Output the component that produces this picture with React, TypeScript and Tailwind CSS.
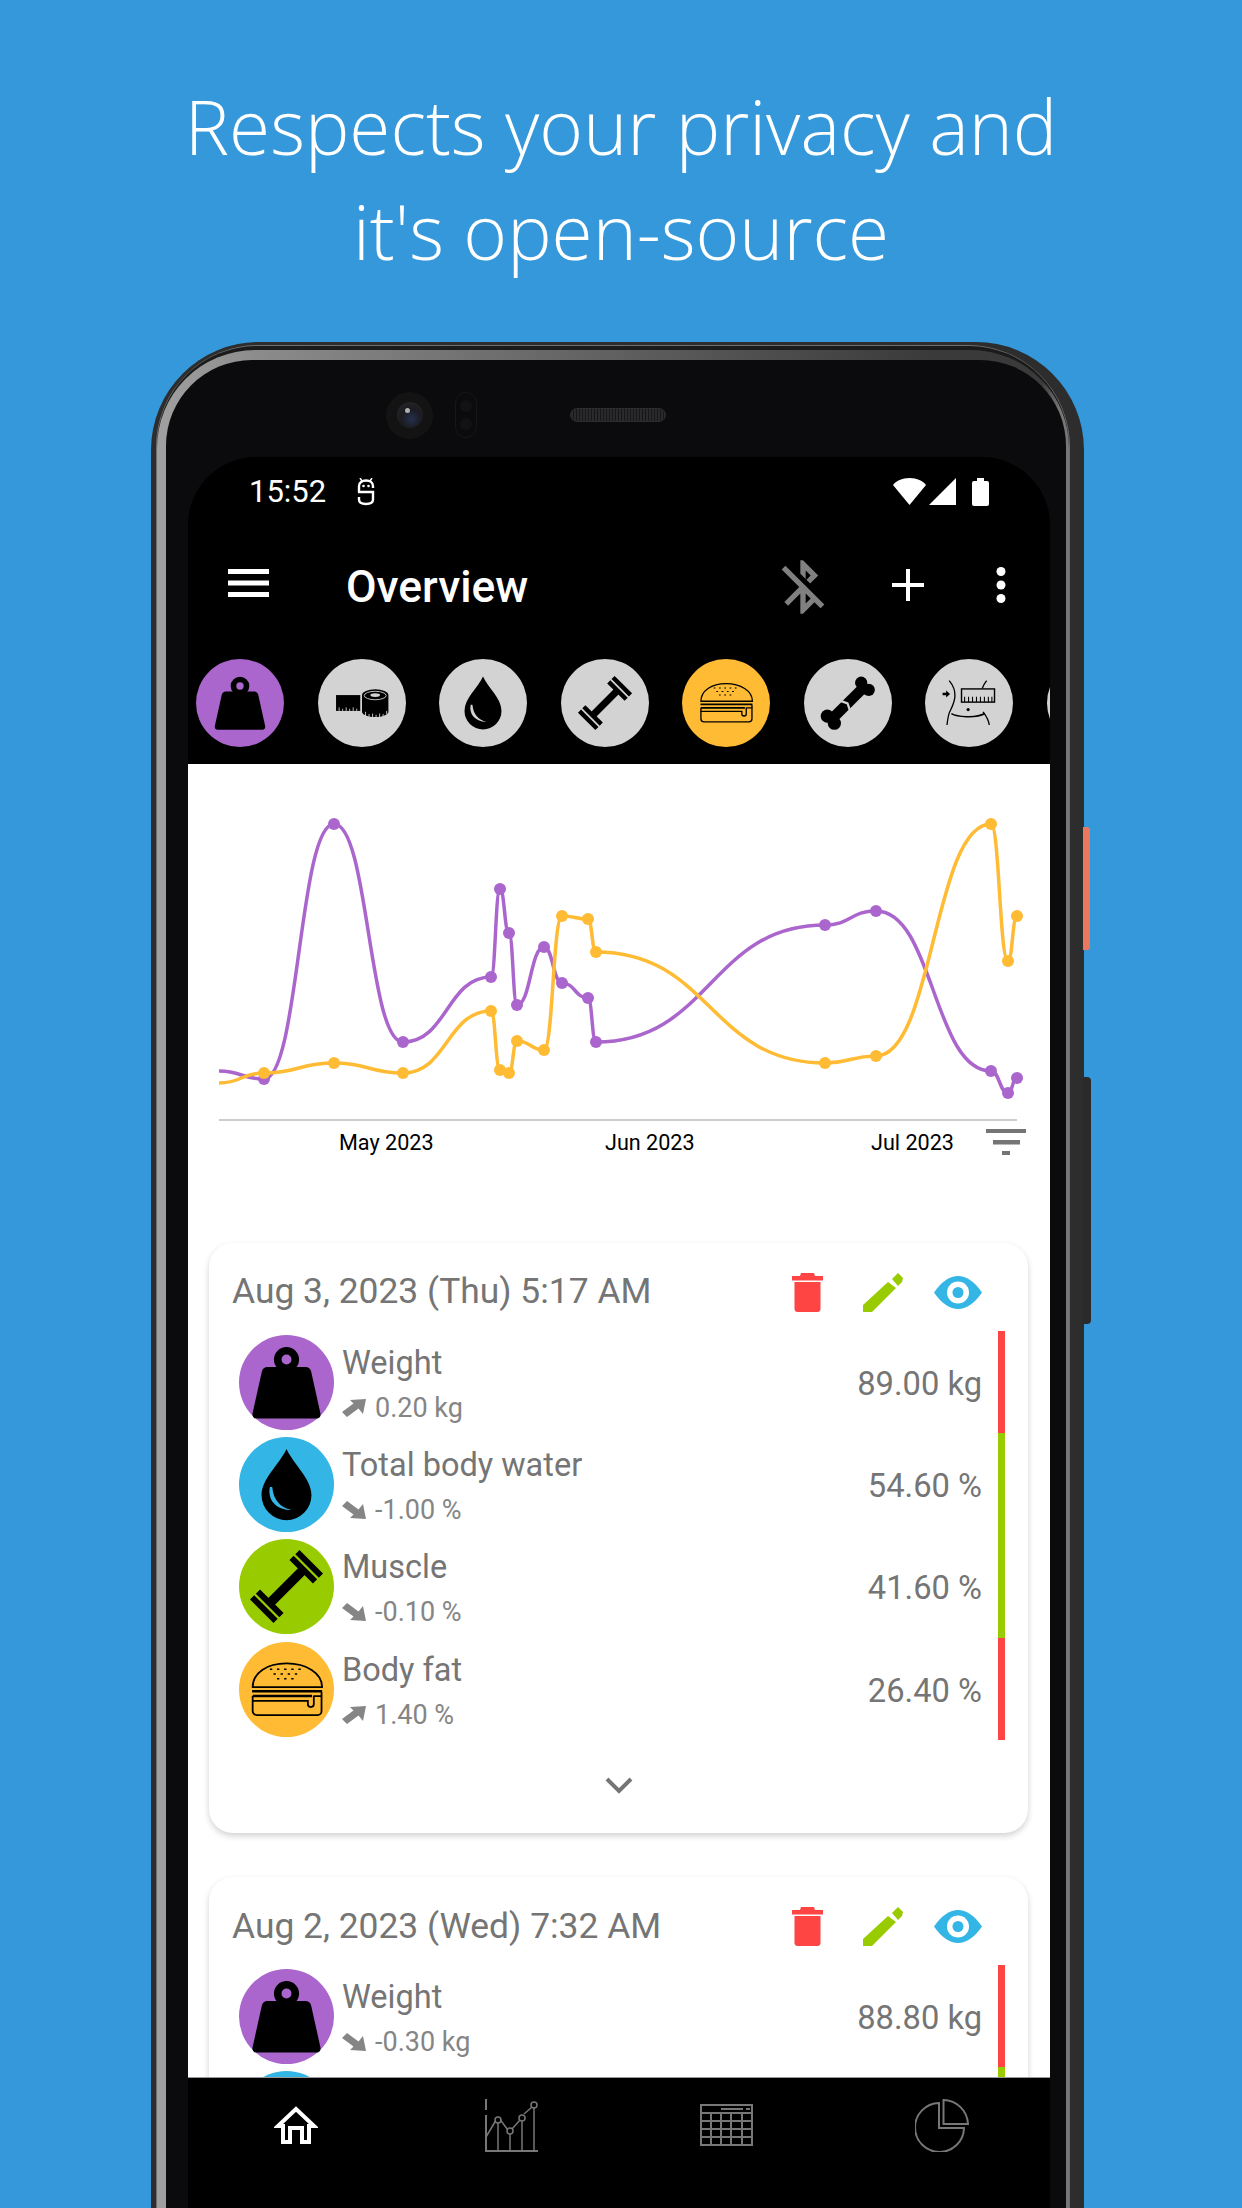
import { MdBluetoothDisabled } from "react-icons/md";

const roboto = "font-['Roboto',sans-serif]";

// chart points, measured in the reference
type Pt = [number, number];
const purple: Pt[] = [[219, 1071], [264, 1079], [334, 824], [403, 1042], [491, 977], [500, 889], [509, 933], [517, 1005], [544, 947], [562, 983], [588, 998], [596, 1042], [825, 925], [876, 911], [991, 1071], [1008, 1093], [1017, 1078]];
const yellow: Pt[] = [[219, 1083], [264, 1073], [334, 1063], [403, 1073], [491, 1011], [500, 1070], [509, 1073], [517, 1041], [544, 1050], [562, 916], [588, 919], [596, 952], [825, 1063], [876, 1056], [991, 824], [1008, 961], [1017, 916]];

// horizontal bezier, flat tangent at every point
function curvePath(points: Pt[]) {
  let d = `M${points[0][0]} ${points[0][1]}`;
  for (let i = 1; i < points.length; i++) {
    const [x0, y0] = points[i - 1];
    const [x1, y1] = points[i];
    const mid = (x0 + x1) / 2;
    d += `C${mid} ${y0} ${mid} ${y1} ${x1} ${y1}`;
  }
  return d;
}

type IconProps = { bg: string };

const WeightIcon = () => (
  <>
    <path fillRule="evenodd" d="M50 20.100a10.600 10.600 0 1 1 0 21.200 10.600 10.600 0 0 1 0-21.200zm0 6.400a4.200 4.200 0 1 0 0 8.400 4.200 4.200 0 0 0 0-8.400z" />
    <path d="M34 37h32c2.500 0 4.300 1.500 4.800 4l7.800 35c.5 2.500-1 4.400-3.200 4.400H24.600c-2.200 0-3.700-1.900-3.200-4.400l7.800-35c.5-2.500 2.300-4 4.800-4z" />
  </>
);

const TapeIcon = ({ bg }: IconProps) => (
  <>
    <rect x="20.500" y="41" width="27.500" height="18" />
    <path d="M24 59v-4M28 59v-2.500M32 59v-4M36 59v-2.500M40 59v-4M44 59v-2.500" stroke={bg} strokeWidth="1" />
    <path d="M50 41a15 6.500 0 0 1 30 0v19c0 3.500-7 6-15 6s-15-2.500-15-6z" />
    <ellipse cx="65" cy="41.500" rx="12.500" ry="4.800" fill="none" stroke={bg} strokeWidth="1" />
    <ellipse cx="65" cy="41" rx="5.500" ry="2.200" fill={bg} />
    <path d="M54 65v-5M58 66v-3.500M62 67v-5M66 67v-3.500M70 67v-5M74 66v-3.500M78 63v-4" stroke={bg} strokeWidth="1" />
  </>
);

const WaterIcon = ({ bg }: IconProps) => (
  <>
    <path d="M50 20C44 33 29 45 29 59a21 21 0 0 0 42 0C71 45 56 33 50 20z" />
    <path d="M36 52c-2 10 4 19 18 19.500-9-2.500-15-8-16-19.500z" fill={bg} />
  </>
);

const MuscleIcon = () => (
  <g transform="rotate(-45 50 50)">
    <rect x="32" y="46" width="36" height="8" />
    <rect x="67.500" y="36" width="5" height="28" />
    <rect x="74.500" y="36" width="5" height="28" />
    <rect x="27.500" y="36" width="5" height="28" />
    <rect x="20.500" y="36" width="5" height="28" />
  </g>
);

const BurgerIcon = () => (
  <g fill="none" stroke="#000" strokeWidth="1.500">
    <path d="M21.500 48c0-12 12-20 28.500-20s30 8 30 20z" />
    <path d="M21 51.500h59M21.500 55.500h50" strokeWidth="2" />
    <path d="M21.500 55.500V68c0 2 1.500 3.500 3.500 3.500h51c2 0 3.500-1.500 3.500-3.500V52" />
    <path d="M21 59.500h45h2v3c0 3 5 3 5 0v-7.500M73 55.500h7" />
    <path d="M36 33h2M42 33h2M48 33h2M54 33h2M60 33h2M39 37h2M45 37h2M51 37h2M57 37h2M42 41h2M48 41h2M54 41h2" strokeWidth="1.200" />
  </g>
);

const BoneIcon = ({ bg }: IconProps) => (
  <>
    <path d="M32 68L68 32" stroke="#000" strokeWidth="12" />
    <circle cx="65" cy="27" r="7" />
    <circle cx="73.500" cy="35" r="7" />
    <circle cx="26.500" cy="65" r="7.500" />
    <circle cx="34.500" cy="73" r="7.500" />
    <path d="M40 47l9.500 3.500 3.500 10.500" fill="none" stroke={bg} strokeWidth="2.500" />
  </>
);

const WaistIcon = () => (
  <g fill="none" stroke="#000" strokeWidth="1.500">
    <path d="M27.500 24.500c5 6 7 12 6.500 18-.5 8-4 13-6.500 19-1.300 4-2 9-2.500 13.500" />
    <path d="M70 24.500c-2 2.500-3.500 5-5 9M66 60c3 4 6.500 9 7 15" />
    <path d="M30 62c6 3.500 27 6 38 0" strokeWidth="1.800" />
    <rect x="41.500" y="34" width="37.500" height="15" strokeWidth="1.600" />
    <path d="M45 49v-6M49.500 49v-6M54 49v-6M58.500 49v-6M63 49v-6M67.500 49v-6M72 49v-6M76 49v-6" strokeWidth="1.200" />
    <circle cx="49" cy="57.500" r="1.800" fill="#000" stroke="none" />
    <path d="M20 38.300h4v-2.500l4.500 4-4.500 4v-2.500h-4z" fill="#000" stroke="none" />
  </g>
);

const Chip = ({ color, children }: { color: string; children?: React.ReactNode }) => (
  <div className="h-[88px] w-[88px] shrink-0 rounded-full" style={{ backgroundColor: color }}>
    <svg viewBox="0 0 100 100" className="h-full w-full">{children}</svg>
  </div>
);

const RowBadge = ({ color, children }: { color: string; children: React.ReactNode }) => (
  <div className="h-[95px] w-[95px] shrink-0 rounded-full" style={{ backgroundColor: color }}>
    <svg viewBox="10 10 80 80" className="h-full w-full">{children}</svg>
  </div>
);

const TrendArrow = ({ up }: { up: boolean }) => (
  <svg viewBox="0 0 24 18" className={`h-[18px] w-[24px] shrink-0 ${up ? "" : "-scale-y-100"}`}>
    <path d="M24 0l-3 15-4.500-5.500L5 18l-5-5 11.500-8.500L8 1z" fill="#858585" />
  </svg>
);

const TrashIcon = () => (
  <svg viewBox="0 0 31 39" className="h-[39px] w-[31px]">
    <path d="M9 0h13l1 3h8v4.500H0V3h8z" fill="#ff4444" />
    <path d="M2.500 9h26v27c0 1.700-1.300 3-3 3h-20c-1.700 0-3-1.300-3-3z" fill="#ff4444" />
  </svg>
);

const PencilIcon = () => (
  <svg viewBox="0 0 40 39" className="h-[39px] w-[40px]">
    <path d="M0 32L25 9l8 6L9 39H0z" fill="#99cc00" />
    <path d="M29 6l6-6 5 5-1 4-4 4z" fill="#99cc00" />
  </svg>
);

const EyeIcon = () => (
  <svg viewBox="0 0 48 33" className="h-[33px] w-[48px]">
    <path d="M0 16.500C8 5 16 0 24 0s16 5 24 16.500C40 28 32 33 24 33S8 28 0 16.500z" fill="#33b5e5" />
    <circle cx="24" cy="16.500" r="11" fill="#fff" />
    <circle cx="24" cy="16.500" r="5.500" fill="#33b5e5" />
  </svg>
);

type Row = { name?: string; change?: string; up?: boolean; value?: string; bar: string; icon: "weight" | "water" | "muscle" | "fat" };

const badges = {
  weight: { color: "#aa66cc", node: <WeightIcon /> },
  water: { color: "#33b5e5", node: <WaterIcon bg="#33b5e5" /> },
  muscle: { color: "#99cc00", node: <MuscleIcon /> },
  fat: { color: "#ffbb33", node: <BurgerIcon /> },
};

const MeasureRow = ({ row }: { row: Row }) => (
  <div className="flex h-[102.3px] items-center border-r-[7px] pr-[16px] pl-[30px]" style={{ borderColor: row.bar }}>
    <RowBadge color={badges[row.icon].color}>{badges[row.icon].node}</RowBadge>
    {row.name && (
      <>
        <div className="ml-[8px] flex flex-col">
          <span className="text-[32.500px] leading-[42px] text-[#757575]">{row.name}</span>
          <span className="mt-[9px] flex items-center gap-[9px] text-[27px] leading-[30px] text-[#858585]">
            <TrendArrow up={!!row.up} />
            {row.change}
          </span>
        </div>
        <span className="mt-[4px] ml-auto text-[32.700px] text-[#757575]">{row.value}</span>
      </>
    )}
  </div>
);

const EntryCard = ({ date, rows, footer }: { date: string; rows: Row[]; footer?: boolean }) => (
  <div className="mr-[22px] mb-[44px] ml-[21px] rounded-[24px] bg-white shadow-[0_3px_6px_rgba(0,0,0,0.18)]">
    <div className="flex h-[88px] items-center pt-[10px] pr-[46px] pl-[23px]">
      <span className="text-[35.400px] text-[#757575]">{date}</span>
      <div className="ml-auto flex items-center gap-[40px]">
        <TrashIcon />
        <PencilIcon />
        <div className="-ml-[9px]">
          <EyeIcon />
        </div>
      </div>
    </div>
    <div className="mr-[23px]">
      {rows.map((row, i) => (
        <MeasureRow key={i} row={row} />
      ))}
    </div>
    {footer && (
      <div className="flex h-[93px] justify-center pt-[36px]">
        <svg viewBox="0 0 28 18" className="h-[18px] w-[28px]">
          <path d="M2 3l12 12L26 3" fill="none" stroke="#757575" strokeWidth="4" />
        </svg>
      </div>
    )}
  </div>
);

const Chart = () => (
  <svg viewBox="188 764 862 400" className="h-[400px] w-full">
    <line x1="219" y1="1120" x2="1017" y2="1120" stroke="#cccccc" strokeWidth="2" />
    <path d={curvePath(purple)} fill="none" stroke="#aa66cc" strokeWidth="3.500" />
    {purple.slice(1).map(([x, y]) => (
      <circle key={x} cx={x} cy={y} r="6" fill="#aa66cc" />
    ))}
    <path d={curvePath(yellow)} fill="none" stroke="#ffbb33" strokeWidth="3.500" />
    {yellow.slice(1).map(([x, y]) => (
      <circle key={x} cx={x} cy={y} r="6" fill="#ffbb33" />
    ))}
    <g fontFamily="Roboto, sans-serif" fontSize="21.600" fill="#000">
      <text x="339" y="1150">May 2023</text>
      <text x="605" y="1150">Jun 2023</text>
      <text x="871" y="1150">Jul 2023</text>
    </g>
    <g fill="#757575">
      <rect x="986" y="1129" width="40" height="4" />
      <rect x="993" y="1140" width="27" height="4.500" />
      <rect x="1002" y="1151" width="8" height="4" />
    </g>
  </svg>
);

export default function App() {
  return (
    <div className={`flex h-[2208px] w-[1242px] flex-col overflow-hidden bg-[#3498db] ${roboto}`}>
      <h1 className="pt-[74px] text-center font-['Open_Sans',sans-serif] text-[74.700px] leading-[105px] font-light text-white">
        Respects your privacy and
        <br />
        it's open-source
      </h1>

      {/* Phone */}
      <div className="relative mt-[58px] ml-[151px] flex h-[1866px] w-[933px] shrink-0 flex-col rounded-t-[108px] bg-[#2d2d2e] pt-[3px] pr-[14px] pl-[5px]">
        <div className="absolute top-[485px] left-[932px] h-[123px] w-[7px] rounded-r-[3px] bg-[#e8795f]" />
        <div className="absolute top-[735px] left-[932px] h-[247px] w-[8px] rounded-r-[4px] bg-[#2a2a2a]" />
        <div className="flex min-h-0 flex-1 flex-col rounded-t-[102px] bg-[#6f6f6f] pt-[1px] pr-[1px] pl-[1px]">
          <div className="flex min-h-0 flex-1 flex-col rounded-t-[100px] bg-[#1b1b1b] pt-[4px]">
            <div className="flex min-h-0 flex-1 flex-col rounded-t-[98px] bg-[linear-gradient(90deg,#a0a0a0_0%,#8a8a8a_12%,#6b6b6b_40%,#3a3a3a_85%,#3a3a3a_97%,#777777_99%)] pt-[10px] pr-[3px] pl-[9px]">
              <div className="flex min-h-0 flex-1 flex-col rounded-t-[86px] bg-[#0b0a0c] pr-[16px] pl-[22px]">
                {/* Camera and speaker */}
                <div className="relative flex h-[97px] shrink-0 items-center pt-[13px]">
                  <div className="ml-[198px] flex h-[47px] w-[47px] items-center justify-center rounded-full bg-[#131314]">
                    <div className="relative h-[26px] w-[26px] rounded-full bg-[radial-gradient(circle_at_55%_65%,#25304f_0%,#1b1b20_45%,#2a2a2c_100%)]">
                      <div className="absolute top-[6px] left-[8px] h-[5px] w-[5px] rounded-full bg-[#b0b0b0]" />
                    </div>
                  </div>
                  <div className="ml-[22px] flex h-[46px] w-[22px] flex-col items-center justify-center gap-[6px] rounded-full border border-[#161618]">
                    <div className="h-[12px] w-[12px] rounded-full bg-[#121213]" />
                    <div className="h-[12px] w-[12px] rounded-full bg-[#121213]" />
                  </div>
                  <div className="ml-[93px] h-[14px] w-[96px] rounded-full border border-[#2c2c2e] bg-[repeating-linear-gradient(90deg,#2a2a2c_0px,#2a2a2c_2px,#161618_2px,#161618_3px)]" />
                </div>

                {/* Screen */}
                <div className="flex min-h-0 flex-1 flex-col overflow-hidden rounded-t-[68px] bg-black">
                  <div className="flex h-[70px] shrink-0 items-center pr-[61px] pl-[61px] text-white">
                    <span className="text-[31px]">15:52</span>
                    <svg viewBox="0 0 20 28" fill="none" stroke="#fff" strokeWidth="2.400" className="ml-[30px] h-[28px] w-[20px]">
                      <path d="M3 14V8c0-3.500 3-5.500 7-5.500s7 2 7 5.500v2M2 14h15v7.500c0 3-3 4.500-7 4.500s-7-1.500-7-4.500V19" />
                      <path d="M4 0l2 3M16 0l-2 3" strokeWidth="1.500" />
                      <circle cx="7.500" cy="8" r="1.300" fill="#fff" stroke="none" />
                      <circle cx="12.500" cy="8" r="1.300" fill="#fff" stroke="none" />
                    </svg>
                    <svg viewBox="0 0 96 28" className="ml-auto h-[28px] w-[96px]" fill="#fff">
                      <path d="M0 7c3-4 9-7 16.500-7S30 3 33 7L16.500 27z" />
                      <path d="M36 27L63 0v27z" />
                      <rect x="79" y="3" width="17" height="25" rx="2" />
                      <rect x="84" y="0" width="7" height="4" />
                    </svg>
                  </div>

                  {/* Toolbar */}
                  <div className="flex h-[120px] shrink-0 items-center pl-[40px] text-white">
                    <svg viewBox="0 0 41 28" className="-mt-[8px] h-[28px] w-[41px]" fill="#fff">
                      <rect width="41" height="5" />
                      <rect y="11.500" width="41" height="5" />
                      <rect y="23" width="41" height="5" />
                    </svg>
                    <span className="ml-[77px] text-[44.400px] font-medium">Overview</span>
                    <MdBluetoothDisabled className="ml-[243px] h-[64px] w-[64px] text-[#808080]" />
                    <svg viewBox="0 0 32 32" className="-mt-[4px] ml-[57px] h-[32px] w-[32px]" fill="#fff">
                      <rect y="14" width="32" height="4" />
                      <rect x="14" width="4" height="32" />
                    </svg>
                    <svg viewBox="0 0 10 36" className="-mt-[4px] ml-[72px] h-[36px] w-[10px]" fill="#fff">
                      <circle cx="5" cy="4.500" r="4.500" />
                      <circle cx="5" cy="18" r="4.500" />
                      <circle cx="5" cy="31.500" r="4.500" />
                    </svg>
                  </div>

                  {/* Measurement chips */}
                  <div className="flex h-[117px] shrink-0 gap-[33.500px] overflow-hidden pt-[12px] pl-[8px]">
                    <Chip color="#aa66cc"><WeightIcon /></Chip>
                    <Chip color="#d3d3d3"><TapeIcon bg="#d3d3d3" /></Chip>
                    <Chip color="#d3d3d3"><WaterIcon bg="#d3d3d3" /></Chip>
                    <Chip color="#d3d3d3"><MuscleIcon /></Chip>
                    <Chip color="#ffbb33"><BurgerIcon /></Chip>
                    <Chip color="#d3d3d3"><BoneIcon bg="#d3d3d3" /></Chip>
                    <Chip color="#d3d3d3"><WaistIcon /></Chip>
                    <Chip color="#d3d3d3" />
                  </div>

                  <div className="min-h-0 flex-1 overflow-hidden bg-white">
                    <Chart />
                    <div className="mt-[79px]">
                      <EntryCard
                        date="Aug 3, 2023 (Thu) 5:17 AM"
                        footer
                        rows={[
                          { name: "Weight", change: "0.20 kg", up: true, value: "89.00 kg", bar: "#ff4444", icon: "weight" },
                          { name: "Total body water", change: "-1.00 %", up: false, value: "54.60 %", bar: "#99cc00", icon: "water" },
                          { name: "Muscle", change: "-0.10 %", up: false, value: "41.60 %", bar: "#99cc00", icon: "muscle" },
                          { name: "Body fat", change: "1.40 %", up: true, value: "26.40 %", bar: "#ff4444", icon: "fat" },
                        ]}
                      />
                      <EntryCard
                        date="Aug 2, 2023 (Wed) 7:32 AM"
                        rows={[
                          { name: "Weight", change: "-0.30 kg", up: false, value: "88.80 kg", bar: "#ff4444", icon: "weight" },
                          { bar: "#99cc00", icon: "water" },
                        ]}
                      />
                    </div>
                  </div>

                  {/* Bottom navigation */}
                  <div className="grid h-[131px] shrink-0 grid-cols-4 border-t border-[#999999] bg-black">
                    <div className="flex justify-center pt-[28px]">
                      <svg viewBox="0 0 44 38" className="h-[38px] w-[44px]" fill="none" stroke="#fff" strokeWidth="4">
                        <path d="M9 36V20H4L22 3l18 17h-5v16h-7V22H16v14z" />
                      </svg>
                    </div>
                    <div className="flex justify-center pt-[21px]">
                      <svg viewBox="0 0 53 53" className="h-[53px] w-[53px]" fill="none" stroke="#777777" strokeWidth="1.500">
                        <path d="M1 0v11M1 16v36h52" strokeWidth="2" />
                        <path d="M1 38L10.500 22M15.500 21l7 9.500M27 30l8-9M39 15l8-7" />
                        <circle cx="13" cy="21" r="3" />
                        <circle cx="25" cy="32" r="3" />
                        <circle cx="37" cy="19" r="3" />
                        <circle cx="49" cy="6" r="3" />
                        <path d="M13 24v28M25 35v17M37 22v30M49 9v43" />
                      </svg>
                    </div>
                    <div className="flex justify-center pt-[26px]">
                      <svg viewBox="0 0 53 42" className="h-[42px] w-[53px]" fill="none" stroke="#777777" strokeWidth="2">
                        <rect x="1" y="1" width="51" height="40" />
                        <path d="M1 9h51M1 17h51M1 25h51M1 33h51M11 9v32M21 9v32M31 9v32M42 9v32" />
                        <path d="M21 5h22M46 5h4" strokeWidth="2" />
                      </svg>
                    </div>
                    <div className="flex justify-center pt-[21px]">
                      <svg viewBox="0 0 54 53" className="h-[53px] w-[54px]" fill="none" stroke="#777777" strokeWidth="2">
                        <path d="M24 4A24.500 24.500 0 1 0 49 29H24z" />
                        <path d="M28.500 1A25 25 0 0 1 53 25H28.500z" />
                      </svg>
                    </div>
                  </div>
                </div>
              </div>
            </div>
          </div>
        </div>
      </div>
    </div>
  );
}
